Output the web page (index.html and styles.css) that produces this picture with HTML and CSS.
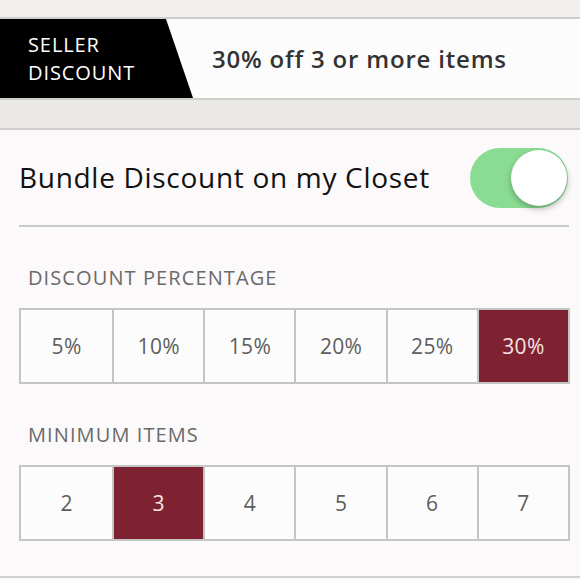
FILE: index.html
```html
<!DOCTYPE html>
<html>
<head>
<meta charset="utf-8">
<link rel="stylesheet" href="styles.css">
</head>
<body>
<div class="topstrip"></div>
<div class="banner">
  <div class="tag"><span>SELLER<br>DISCOUNT</span></div>
  <div class="summary">30% off 3 or more items</div>
</div>
<div class="band"></div>
<main class="content">
  <div class="toggle-row">
    <span class="toggle-label">Bundle Discount on my Closet</span>
    <span class="switch"><span class="knob"></span></span>
  </div>
  <div class="section-label">DISCOUNT PERCENTAGE</div>
  <div class="options">
    <div class="opt">5%</div>
    <div class="opt">10%</div>
    <div class="opt">15%</div>
    <div class="opt">20%</div>
    <div class="opt">25%</div>
    <div class="opt selected">30%</div>
  </div>
  <div class="section-label second">MINIMUM ITEMS</div>
  <div class="options">
    <div class="opt">2</div>
    <div class="opt selected">3</div>
    <div class="opt">4</div>
    <div class="opt">5</div>
    <div class="opt">6</div>
    <div class="opt">7</div>
  </div>
</main>
</body>
</html>
```
FILE: styles.css
```css
* { box-sizing: border-box; }
html, body { margin: 0; padding: 0; }
body {
  width: 580px;
  height: 580px;
  overflow: hidden;
  background: #fbf9f9;
  font-family: "Open Sans", "Lato", sans-serif;
  color: #222;
}
.topstrip {
  height: 19px;
  background: #f1f0ee;
  border-bottom: 2px solid #cfcdcb;
}
.banner {
  height: 81px;
  display: flex;
  align-items: center;
  background: #fdfcfc;
  border-bottom: 2px solid #cfcdcb;
}
.tag {
  width: 193px;
  height: 100%;
  background: #000;
  color: #fff;
  clip-path: polygon(0 0, 166px 0, 100% 100%, 0 100%);
  display: flex;
  align-items: center;
  padding-left: 28px;
  font-size: 20px;
  letter-spacing: 0.9px;
  line-height: 28px;
}
.summary {
  margin-left: 19px;
  font-size: 24px;
  letter-spacing: 0.8px;
  font-weight: 600;
  color: #333;
}
.band {
  height: 30px;
  background: #ebe9e5;
  border-bottom: 2px solid #cfcdcb;
}
.content {
  padding: 0 11px 0 19px;
  height: 448px;
  border-bottom: 2px solid #d2d0d0;
}
.toggle-row {
  height: 97px;
  display: flex;
  align-items: center;
  justify-content: space-between;
  border-bottom: 2px solid #cbcaca;
  padding-top: 1px;
}
.toggle-label {
  font-size: 28px;
  letter-spacing: 0.7px;
  color: #111;
  padding-bottom: 2px;
}
.switch {
  width: 98px;
  height: 60px;
  border-radius: 30px;
  background: #8bdc93;
  display: flex;
  align-items: center;
  justify-content: flex-end;
  padding-right: 1px;
  margin-right: 1px;
}
.knob {
  width: 56px;
  height: 56px;
  border-radius: 50%;
  background: #fff;
  box-shadow: 0 3px 6px rgba(0,0,0,0.28);
}
.section-label {
  margin: 39px 0 0 9px;
  font-size: 20px;
  letter-spacing: 1.1px;
  line-height: 24px;
  color: #6a6a6a;
  height: 24px;
}
.section-label.second { margin-top: 39px; }
.options {
  margin-top: 18px;
  width: 551px;
  height: 76px;
  display: grid;
  grid-template-columns: repeat(6, 1fr);
  border: 2px solid #c6c5c5;
  background: #fdfcfc;
}
.opt {
  display: flex;
  align-items: center;
  justify-content: center;
  font-size: 21px;
  letter-spacing: 0.3px;
  color: #5e5e5e;
  border-left: 2px solid #c6c5c5;
}
.opt:first-child { border-left: none; }
.opt.selected {
  background: #7e2130;
  color: #f6e4e6;
}
```
